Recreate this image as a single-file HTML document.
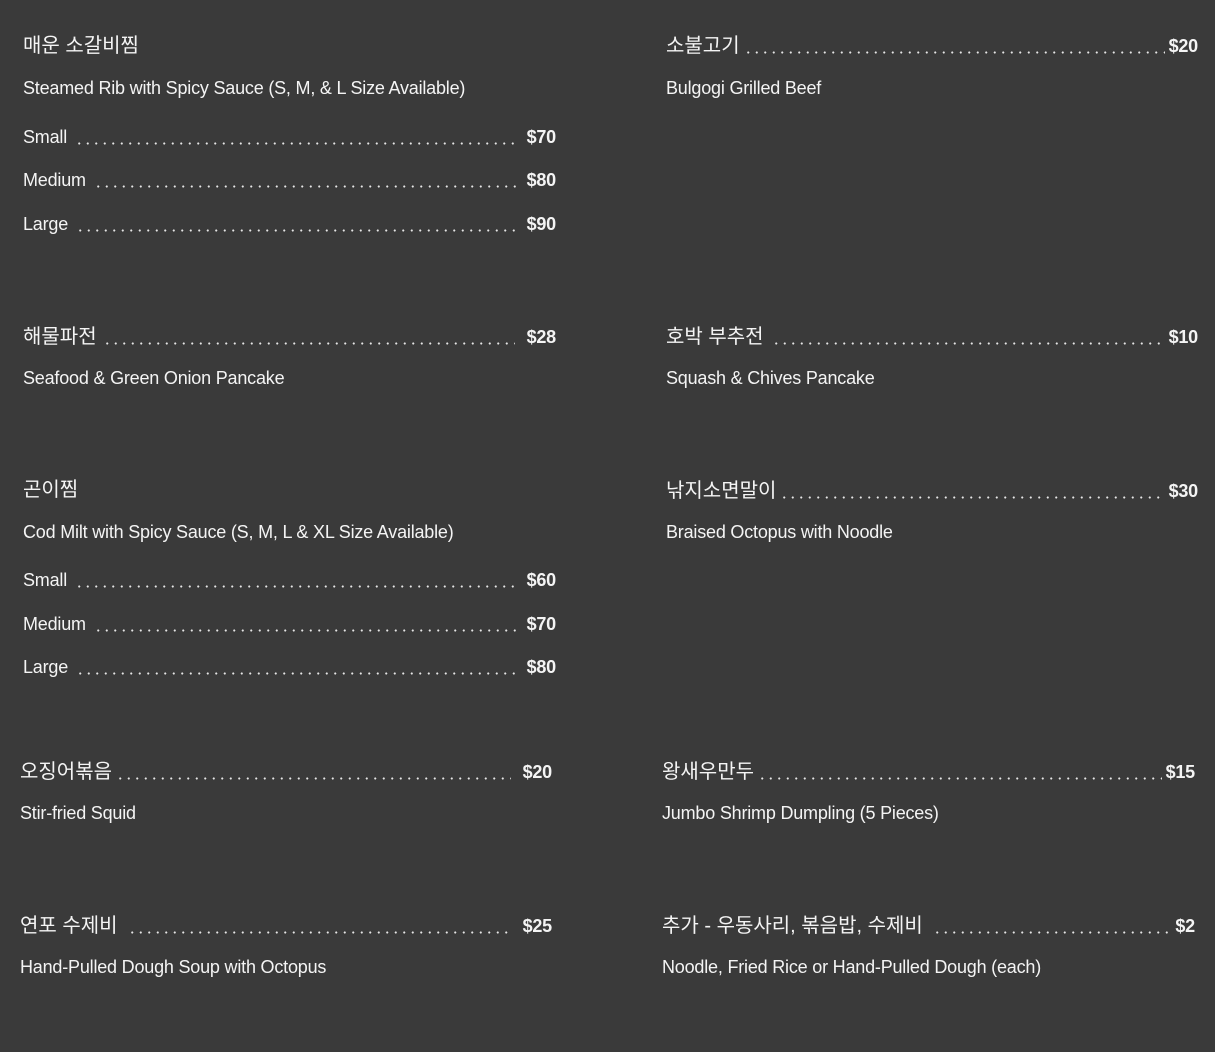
<!DOCTYPE html>
<html><head><meta charset="utf-8"><style>
html,body{margin:0;padding:0;background:#3a3a3a;width:1215px;height:1052px;overflow:hidden}
body{position:relative;color:#f4f4f4;font-family:"Liberation Sans","Noto Sans CJK KR",sans-serif;font-size:18px;letter-spacing:-0.2px}
.r{position:absolute;height:24px;line-height:24px;display:flex;white-space:nowrap;margin-top:1px}
.k{font-size:20px;letter-spacing:0}
.d{flex:1;margin:0 8px;height:24px;background-image:radial-gradient(circle,#e6e6e6 0.9px,transparent 1.2px);background-size:8.5px 3px;background-repeat:repeat-x;background-position:0 17px}
.p{font-weight:bold;letter-spacing:-0.2px}
</style></head><body>
<div class="r" style="left:23px;top:33px;width:533px"><span class="k">매운 소갈비찜</span></div>
<div class="r" style="left:23px;top:75px">Steamed Rib with Spicy Sauce (S, M, &amp; L Size Available)</div>
<div class="r" style="left:23px;top:124px;width:533px"><span>Small</span><span class="d"></span><span class="p">$70</span></div>
<div class="r" style="left:23px;top:167px;width:533px"><span>Medium</span><span class="d"></span><span class="p">$80</span></div>
<div class="r" style="left:23px;top:211px;width:533px"><span>Large</span><span class="d"></span><span class="p">$90</span></div>

<div class="r" style="left:666px;top:33px;width:532px"><span class="k">소불고기</span><span class="d" style="margin:0 4px"></span><span class="p">$20</span></div>
<div class="r" style="left:666px;top:75px">Bulgogi Grilled Beef</div>

<div class="r" style="left:23px;top:324px;width:533px"><span class="k">해물파전</span><span class="d" style="margin:0 12px 0 6px"></span><span class="p">$28</span></div>
<div class="r" style="left:23px;top:365px">Seafood &amp; Green Onion Pancake</div>
<div class="r" style="left:666px;top:324px;width:532px"><span class="k">호박 부추전</span><span class="d"></span><span class="p">$10</span></div>
<div class="r" style="left:666px;top:365px">Squash &amp; Chives Pancake</div>

<div class="r" style="left:23px;top:477px"><span class="k">곤이찜</span></div>
<div class="r" style="left:23px;top:519px">Cod Milt with Spicy Sauce (S, M, L &amp; XL Size Available)</div>
<div class="r" style="left:23px;top:567px;width:533px"><span>Small</span><span class="d"></span><span class="p">$60</span></div>
<div class="r" style="left:23px;top:611px;width:533px"><span>Medium</span><span class="d"></span><span class="p">$70</span></div>
<div class="r" style="left:23px;top:654px;width:533px"><span>Large</span><span class="d"></span><span class="p">$80</span></div>
<div class="r" style="left:666px;top:478px;width:532px"><span class="k">낚지소면말이</span><span class="d" style="margin:0 4px"></span><span class="p">$30</span></div>
<div class="r" style="left:666px;top:519px">Braised Octopus with Noodle</div>

<div class="r" style="left:20px;top:759px;width:532px"><span class="k">오징어볶음</span><span class="d" style="margin:0 12px 0 4px"></span><span class="p">$20</span></div>
<div class="r" style="left:20px;top:800px">Stir-fried Squid</div>
<div class="r" style="left:662px;top:759px;width:533px"><span class="k">왕새우만두</span><span class="d" style="margin:0 4px"></span><span class="p">$15</span></div>
<div class="r" style="left:662px;top:800px">Jumbo Shrimp Dumpling (5 Pieces)</div>

<div class="r" style="left:20px;top:913px;width:532px"><span class="k">연포 수제비</span><span class="d" style="margin:0 12px 0 10px"></span><span class="p">$25</span></div>
<div class="r" style="left:20px;top:954px">Hand-Pulled Dough Soup with Octopus</div>
<div class="r" style="left:662px;top:913px;width:533px"><span class="k">추가 - 우동사리, 볶음밥, 수제비</span><span class="d" style="margin:0 2px 0 10px"></span><span class="p">$2</span></div>
<div class="r" style="left:662px;top:954px">Noodle, Fried Rice or Hand-Pulled Dough (each)</div>
</body></html>
